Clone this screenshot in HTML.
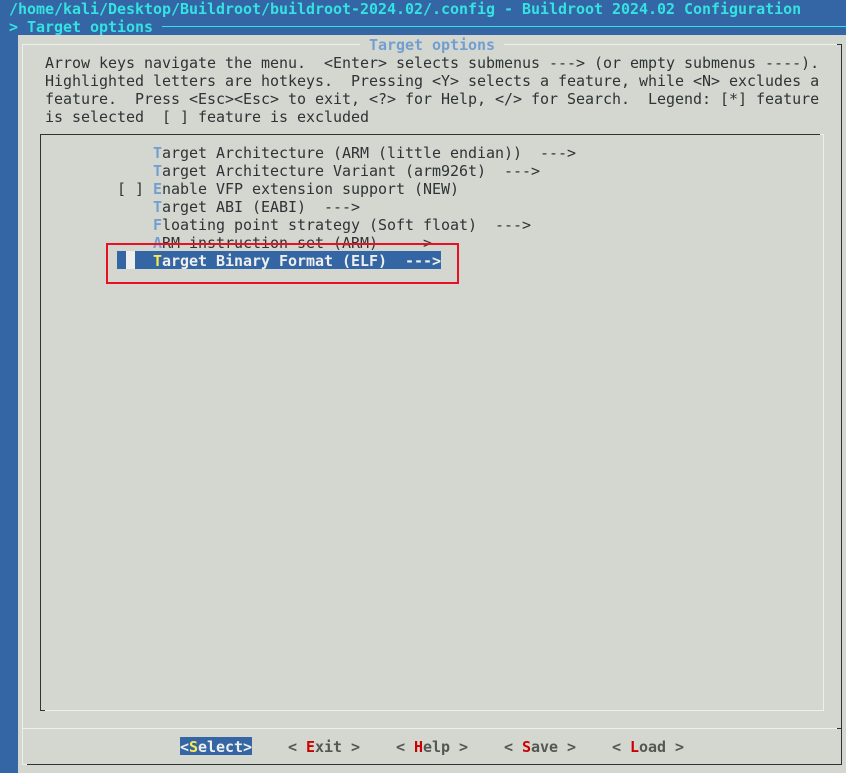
<!DOCTYPE html>
<html>
<head>
<meta charset="utf-8">
<style>
html,body{margin:0;padding:0;}
body{width:846px;height:773px;overflow:hidden;position:relative;background:#3465a4;font-family:"DejaVu Sans Mono","Liberation Mono",monospace;font-size:15px;letter-spacing:-0.03px;}
.t{position:absolute;white-space:pre;line-height:18px;height:18px;color:#2e3436;margin-top:1px;}
.b{position:absolute;}
.c{color:#34e2e2;font-weight:bold;}
.h{color:#729fcf;font-weight:bold;}
.r{color:#cc0000;font-weight:bold;}
.y{color:#fce94f;font-weight:bold;}
.w{color:#eeeeec;font-weight:bold;}
.g{color:#555753;font-weight:bold;}
</style>
</head>
<body>
<div class="b" style="left:18px;top:35px;width:828px;height:738px;background:#d3d7cf"></div>
<div class="t c" style="left:9px;top:-1px">/home/kali/Desktop/Buildroot/buildroot-2024.02/.config - Buildroot 2024.02 Configuration</div>
<div class="t c" style="left:9px;top:17px">&gt; Target options</div>
<div class="b" style="left:162px;top:26px;width:684px;height:1px;background:#34e2e2"></div>

<div class="b" style="left:22px;top:44px;width:338px;height:1px;background:#eeeeec"></div>
<div class="b" style="left:504px;top:44px;width:333px;height:1px;background:#eeeeec"></div>
<div class="b" style="left:837px;top:44px;width:5px;height:1px;background:#2e3436"></div>
<div class="b" style="left:22px;top:44px;width:1px;height:721px;background:#eeeeec"></div>
<div class="b" style="left:841px;top:44px;width:1px;height:721px;background:#2e3436"></div>
<div class="b" style="left:27px;top:764px;width:815px;height:1px;background:#2e3436"></div>
<div class="b" style="left:22px;top:764px;width:5px;height:1px;background:#eeeeec"></div>
<div class="b" style="left:22px;top:728px;width:815px;height:1px;background:#eeeeec"></div>
<div class="b" style="left:837px;top:728px;width:5px;height:1px;background:#2e3436"></div>

<div class="t h" style="left:369px;top:35px">Target options</div>
<div class="t" style="left:45px;top:53px">Arrow keys navigate the menu.  &lt;Enter&gt; selects submenus ---&gt; (or empty submenus ----).</div>
<div class="t" style="left:45px;top:71px">Highlighted letters are hotkeys.  Pressing &lt;Y&gt; selects a feature, while &lt;N&gt; excludes a</div>
<div class="t" style="left:45px;top:89px">feature.  Press &lt;Esc&gt;&lt;Esc&gt; to exit, &lt;?&gt; for Help, &lt;/&gt; for Search.  Legend: [*] feature</div>
<div class="t" style="left:45px;top:107px">is selected  [ ] feature is excluded</div>

<div class="b" style="left:40px;top:134px;width:780px;height:1px;background:#2e3436"></div>
<div class="b" style="left:820px;top:134px;width:4px;height:1px;background:#eeeeec"></div>
<div class="b" style="left:40px;top:134px;width:1px;height:577px;background:#2e3436"></div>
<div class="b" style="left:823px;top:134px;width:1px;height:577px;background:#eeeeec"></div>
<div class="b" style="left:45px;top:710px;width:779px;height:1px;background:#eeeeec"></div>
<div class="b" style="left:40px;top:710px;width:5px;height:1px;background:#2e3436"></div>

<div class="t" style="left:153px;top:143px"><span class="h">T</span>arget Architecture (ARM (little endian))  ---&gt;</div>
<div class="t" style="left:153px;top:161px"><span class="h">T</span>arget Architecture Variant (arm926t)  ---&gt;</div>
<div class="t" style="left:117px;top:179px">[ ] <span class="h">E</span>nable VFP extension support (NEW)</div>
<div class="t" style="left:153px;top:197px"><span class="h">T</span>arget ABI (EABI)  ---&gt;</div>
<div class="t" style="left:153px;top:215px"><span class="h">F</span>loating point strategy (Soft float)  ---&gt;</div>
<div class="t" style="left:153px;top:233px"><span class="h">A</span>RM instruction set (ARM)  ---&gt;</div>

<div class="b" style="left:117px;top:251px;width:324px;height:18px;background:#3465a4"></div>
<div class="b" style="left:126px;top:251px;width:9px;height:18px;background:#eeeeec"></div>
<div class="t w" style="left:153px;top:251px"><span class="y">T</span>arget Binary Format (ELF)  ---&gt;</div>

<div class="b" style="left:106px;top:243px;width:349px;height:37px;border:2px solid #e81123"></div>

<div class="b" style="left:180px;top:737px;width:72px;height:18px;background:#3465a4"></div>
<div class="t w" style="left:180px;top:737px">&lt;<span class="y">S</span>elect&gt;</div>
<div class="t g" style="left:288px;top:737px">&lt; <span class="r">E</span>xit &gt;</div>
<div class="t g" style="left:396px;top:737px">&lt; <span class="r">H</span>elp &gt;</div>
<div class="t g" style="left:504px;top:737px">&lt; <span class="r">S</span>ave &gt;</div>
<div class="t g" style="left:612px;top:737px">&lt; <span class="r">L</span>oad &gt;</div>
</body>
</html>
